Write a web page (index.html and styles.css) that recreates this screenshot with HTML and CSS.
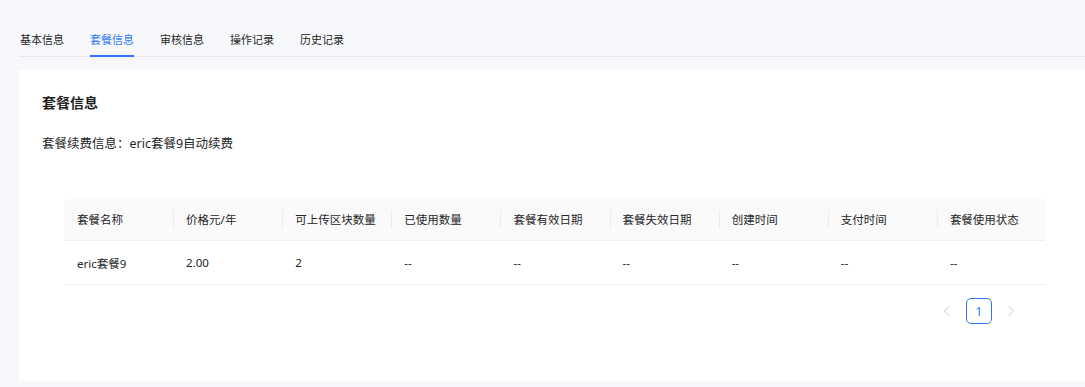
FILE: index.html
```html
<!DOCTYPE html>
<html lang="zh-CN">
<head>
    <meta charset="UTF-8">
    <meta name="viewport" content="width=device-width, initial-scale=1.0">
    <title>套餐信息</title>
    <link rel="stylesheet" href="styles.css">
</head>
<body>
    <div class="pagina">
        <nav class="tabs">
            <span class="tab">基本信息</span>
            <span class="tab attivo">套餐信息</span>
            <span class="tab">审核信息</span>
            <span class="tab">操作记录</span>
            <span class="tab">历史记录</span>
        </nav>

        <section class="card">
            <h2 class="titolo">套餐信息</h2>
            <p class="rinnovo">套餐续费信息：eric套餐9自动续费</p>

            <table class="tabella">
                <thead>
                    <tr>
                        <th>套餐名称</th>
                        <th>价格元/年</th>
                        <th>可上传区块数量</th>
                        <th>已使用数量</th>
                        <th>套餐有效日期</th>
                        <th>套餐失效日期</th>
                        <th>创建时间</th>
                        <th>支付时间</th>
                        <th>套餐使用状态</th>
                    </tr>
                </thead>
                <tbody>
                    <tr>
                        <td>eric套餐9</td>
                        <td>2.00</td>
                        <td>2</td>
                        <td>--</td>
                        <td>--</td>
                        <td>--</td>
                        <td>--</td>
                        <td>--</td>
                        <td>--</td>
                    </tr>
                </tbody>
            </table>

            <div class="paginazione">
                <span class="freccia">
                    <svg width="8" height="12" viewBox="0 0 8 12"><path d="M6.5 1 L1.5 6 L6.5 11" fill="none" stroke="#c8c8c8" stroke-width="1"/></svg>
                </span>
                <span class="pag attivo">1</span>
                <span class="freccia">
                    <svg width="8" height="12" viewBox="0 0 8 12"><path d="M1.5 1 L6.5 6 L1.5 11" fill="none" stroke="#c8c8c8" stroke-width="1"/></svg>
                </span>
            </div>
        </section>
    </div>
</body>
</html>
```

FILE: styles.css
```css
body {
    margin: 0;
    background-color: #f7f8fc;
    font-family: "Noto Sans", "Noto Sans CJK SC", sans-serif;
    color: #262626;
}

.pagina {
    padding: 22px 0 5px 19px;
}

.tabs {
    display: flex;
    gap: 26px;
    padding-left: 1px;
    border-bottom: 1px solid #e6e8ee;
}

.tab {
    font-size: 11px;
    line-height: 14px;
    padding: 11px 0 8px;
    border-bottom: 2px solid transparent;
    margin-bottom: -1px;
    color: #262626;
}

.tab.attivo {
    color: #2f78f4;
    border-bottom-color: #2f78f4;
}

.card {
    margin-top: 13px;
    background: white;
    padding: 23px 0 57px 23px;
}

.titolo {
    margin: 0;
    font-size: 14px;
    line-height: 20px;
    font-weight: bold;
    color: #1f1f1f;
}

.rinnovo {
    margin: 21px 0 0;
    font-size: 12.5px;
    line-height: 20px;
    color: #262626;
}

.tabella {
    margin: 44px 39px 0 22px;
    width: calc(100% - 61px);
    border-collapse: collapse;
    table-layout: fixed;
    font-size: 11.5px;
}

.tabella th {
    height: 42px;
    padding: 0 13px;
    text-align: left;
    font-weight: normal;
    color: #262626;
    background: linear-gradient(#ececec, #ececec) left center / 1px 18px no-repeat, #fafafa;
    border-bottom: 1px solid #efefef;
    white-space: nowrap;
}

.tabella th:first-child {
    background: #fafafa;
    border-top-left-radius: 8px;
}

.tabella th:last-child {
    border-top-right-radius: 8px;
}

.tabella td {
    height: 43px;
    padding: 0 13px;
    border-bottom: 1px solid #efefef;
    color: #262626;
}

.paginazione {
    display: flex;
    justify-content: flex-end;
    gap: 6px;
    margin-top: 13px;
    padding-right: 61px;
}

.freccia,
.pag {
    width: 26px;
    height: 26px;
    display: flex;
    align-items: center;
    justify-content: center;
    box-sizing: border-box;
    font-size: 12px;
}

.pag.attivo {
    border: 1px solid #2f78f4;
    border-radius: 5px;
    color: #2f78f4;
}
```
